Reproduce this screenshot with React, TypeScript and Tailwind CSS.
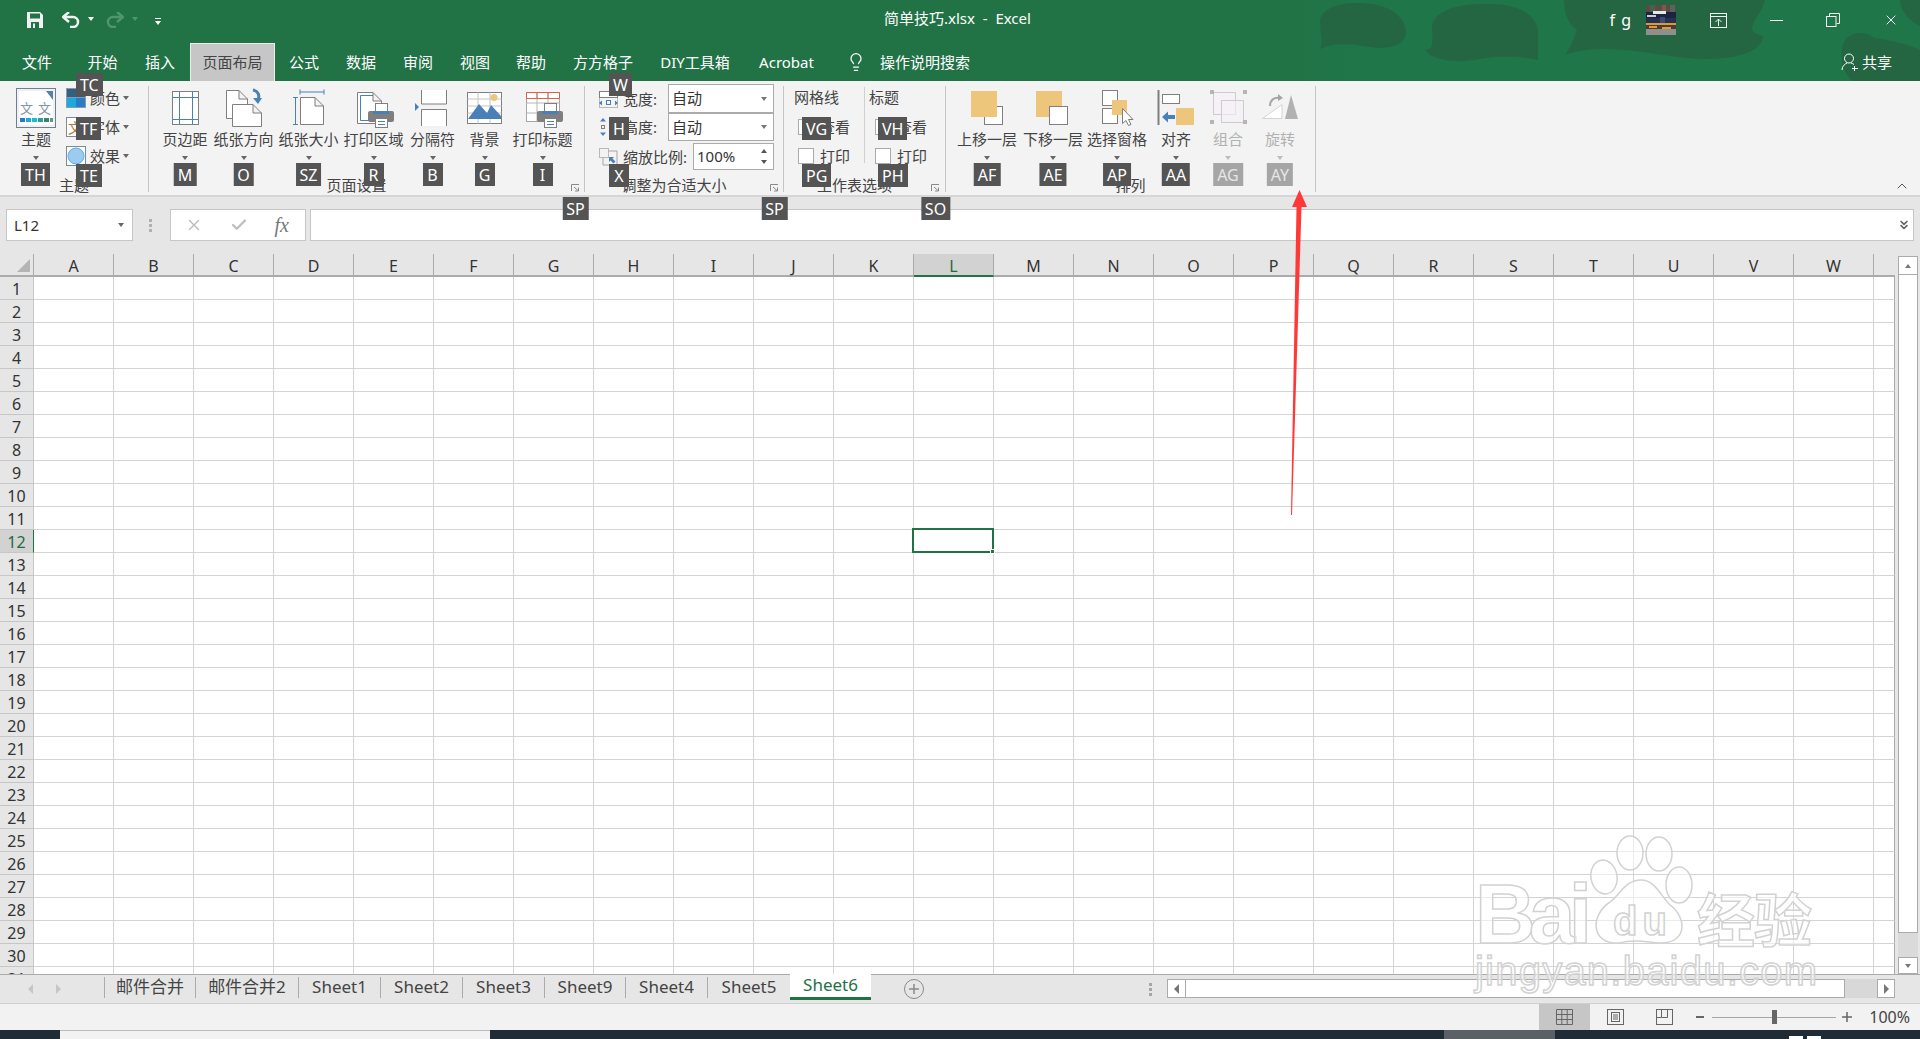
import type { ReactNode } from "react";
import { Check, ChevronUp, ChevronsDown, Lightbulb, X } from "lucide-react";

const GRAY = "#7f7f7f";
const BLUE = "#4a80b8";
const TAN = "#edc67c";
const PALE = "#cfc9d3";

const COLS = "ABCDEFGHIJKLMNOPQRSTUVW".split("");
const ROWS = Array.from({ length: 31 }, (_, i) => i + 1);

function Tip({ label, className = "", off }: { label: string; className?: string; off?: boolean }) {
  return (
    <span
      className={`absolute z-30 flex h-[23px] min-w-[20px] items-center justify-center px-[4px] text-[16px] leading-none ${
        off ? "bg-[#a5a5a5] text-[#e6e6e6]" : "bg-[#545454] text-white"
      } ${className}`}
    >
      {label}
    </span>
  );
}

function Caret({ className = "border-t-[#666]" }: { className?: string }) {
  return <span className={`block h-0 w-0 border-x-[3.5px] border-t-[4px] border-x-transparent ${className}`} />;
}

function BigButton({ w, label, tip, off, children }: { w: string; label: string; tip: string; off?: boolean; children: ReactNode }) {
  return (
    <div className={`relative flex flex-col items-center pt-px ${w}`}>
      <svg width="44" height="42" viewBox="0 0 44 42" fill="none">
        {children}
      </svg>
      <span className={`h-[20px] whitespace-nowrap text-[15px] leading-[20px] ${off ? "text-[#b1b1b1]" : "text-[#444]"}`}>{label}</span>
      <span className="mt-[7px]">
        <Caret className={off ? "border-t-[#bdbdbd]" : "border-t-[#666]"} />
      </span>
      <Tip label={tip} off={off} className="left-1/2 top-[77px] -translate-x-1/2" />
    </div>
  );
}

function Launcher({ tip, right }: { tip: string; right: string }) {
  return (
    <div className={`absolute top-[98px] h-[8px] w-[9px] ${right}`}>
      <svg width="9" height="8" viewBox="0 0 9 8" fill="none" stroke="#8a8a8a" className="block">
        <path d="M.5 7V.5H8M3 3l4 3.5M7.5 3.5v3.5H4" />
      </svg>
      <Tip label={tip} className="left-1/2 top-[13px] -translate-x-1/2" />
    </div>
  );
}

function Group({ w, label, pad, launcher, children }: { w: string; label: string; pad?: string; launcher?: ReactNode; children: ReactNode }) {
  return (
    <div className={`relative flex h-[110px] flex-col ${w}`}>
      <div className="flex h-[89px]">{children}</div>
      <div className={`h-[20px] whitespace-nowrap text-center text-[15px] leading-[20px] text-[#444] ${pad ?? ""}`}>{label}</div>
      {launcher}
    </div>
  );
}

function Sep() {
  return <div className="h-[106px] w-px shrink-0 bg-[#c6c6c6]" />;
}

function Page({ x, y, w, h, fold = 9 }: { x: number; y: number; w: number; h: number; fold?: number }) {
  return (
    <path
      d={`M${x + 0.5} ${y + 0.5}H${x + w - fold}L${x + w - 0.5} ${y + fold}V${y + h - 0.5}H${x + 0.5}ZM${x + w - fold} ${y + 0.5}V${y + fold}H${x + w - 0.5}`}
      fill="#fff"
      stroke={GRAY}
    />
  );
}

function Printer({ x, y }: { x: number; y: number }) {
  return (
    <g>
      <rect x={x + 7.5} y={y + 0.5} width="12" height="10" fill="#fff" stroke={GRAY} />
      <rect x={x} y={y + 8} width="26" height="11" rx="2" fill={GRAY} />
      <rect x={x + 5} y={y + 8} width="16" height="3" fill={BLUE} />
      <rect x={x + 7.5} y={y + 15.5} width="12" height="9" fill="#fff" stroke={GRAY} />
      <path d={`M${x + 10} ${y + 18.5}h7M${x + 10} ${y + 21.5}h7`} stroke={BLUE} />
    </g>
  );
}

function ScaleRow({ icon, label, value, inputW, h, children }: { icon: ReactNode; label: string; value: string; inputW: string; h: string; children?: ReactNode }) {
  return (
    <div className={`relative flex items-center ${h}`}>
      <svg width="19" height="18" viewBox="0 0 19 18" fill="none" className="mr-[5px] shrink-0">
        {icon}
      </svg>
      <span className="flex-1 whitespace-nowrap text-[15px] leading-[20px] text-[#444]">{label}</span>
      <div className={`flex h-full shrink-0 items-center justify-between border border-[#ababab] bg-white pl-[3px] pr-[6px] text-[15px] text-[#333] ${inputW}`}>
        <span>{value}</span>
        {value === "100%" ? (
          <span className="flex flex-col gap-[7px]">
            <Caret className="rotate-180 border-t-[#555]" />
            <Caret className="border-t-[#555]" />
          </span>
        ) : (
          <Caret className="border-t-[#777]" />
        )}
      </div>
      {children}
    </div>
  );
}

function CheckRow({ label }: { label: string }) {
  return (
    <div className="flex h-[16px] items-center gap-[6px]">
      <span className="h-[16px] w-[16px] shrink-0 border border-[#ababab] bg-white" />
      <span className="text-[15px] leading-[20px] text-[#444]">{label}</span>
    </div>
  );
}

function Ribbon() {
  return (
    <div className="relative z-10 flex h-[116px] items-start border-b-2 border-[#d6d6d6] bg-[#f3f3f3] pt-[5px]">
      <Group w="w-[148px]" label="主题">
        <div className="flex pl-[6px]">
          <div className="relative flex w-[60px] flex-col items-center pt-px">
            <svg width="44" height="42" viewBox="0 0 44 42" fill="none">
              <rect x="2.5" y="1.5" width="39" height="39" fill="#fff" stroke="#6f7f91" />
              <rect x="4" y="3" width="36" height="36" fill="#fff" stroke="#dfe4ea" />
              <path d="M32 4h7v9z" fill="#5a7fa5" />
              <text x="6" y="26" fontSize="13" fill="#7e96a8">文</text>
              <text x="24" y="26" fontSize="13" fill="#7e96a8">文</text>
              <rect x="6" y="31" width="5" height="4" fill="#2b78c5" />
              <rect x="12" y="31" width="5" height="4" fill="#1ca9d6" />
              <rect x="18" y="31" width="5" height="4" fill="#1cbccb" />
              <rect x="24" y="31" width="5" height="4" fill="#2aa198" />
              <rect x="30" y="31" width="5" height="4" fill="#36866f" />
              <rect x="36" y="31" width="3" height="4" fill="#5a9a88" />
            </svg>
            <span className="h-[20px] text-[15px] leading-[20px] text-[#444]">主题</span>
            <span className="mt-[7px]">
              <Caret />
            </span>
            <Tip label="TH" className="left-[15px] top-[77px]" />
          </div>
          <div className="relative -mt-[3px] flex flex-col">
            {[
              { t: "颜色", tip: "TC", pos: "left-[10px] -top-[10px]" },
              { t: "字体", tip: "TF", pos: "left-[10px] top-[5px]" },
              { t: "效果", tip: "TE", pos: "left-[10px] top-[23px]" },
            ].map((r, i) => (
              <div key={r.t} className="relative flex h-[29px] items-center">
                <svg width="20" height="20" viewBox="0 0 20 20" className="shrink-0">
                  {i === 0 && (
                    <g>
                      <rect width="20" height="20" fill="#8a9aa8" />
                      <rect x="1" y="1" width="18" height="8" fill="#34607f" />
                      <rect x="1" y="10" width="9" height="9" fill="#1ca9e2" />
                      <rect x="10" y="10" width="9" height="9" fill="#2b7cc8" />
                    </g>
                  )}
                  {i === 1 && (
                    <g>
                      <rect x=".5" y=".5" width="19" height="19" fill="#fff" stroke="#7f8a96" />
                      <text x="2" y="16" fontSize="14" fill="#b5763a">文</text>
                    </g>
                  )}
                  {i === 2 && (
                    <g>
                      <rect x=".5" y=".5" width="19" height="19" fill="#fff" stroke="#7f8a96" />
                      <circle cx="10" cy="10" r="8" fill="#9ccbf0" stroke="#58b0e6" />
                    </g>
                  )}
                </svg>
                <span className="ml-[4px] text-[15px] leading-[20px] text-[#444]">{r.t}</span>
                <span className="ml-[3px]">
                  <Caret />
                </span>
                <Tip label={r.tip} className={r.pos} />
              </div>
            ))}
          </div>
        </div>
      </Group>
      <Sep />

      <Group w="w-[435px]" label="页面设置" pad="pr-[20px]" launcher={<Launcher tip="SP" right="right-[4px]" />}>
        <div className="flex pl-[9px]">
          <BigButton w="w-[54px]" label="页边距" tip="M">
            <rect x="9.5" y="4.5" width="26" height="33" fill="#fff" stroke={GRAY} />
            <path d="M16.5 4.5v33M29.5 4.5v33M9.5 10.5h26M9.5 32.5h26" stroke={BLUE} />
          </BigButton>
          <BigButton w="w-[63px]" label="纸张方向" tip="O">
            <Page x={4} y={3} w={22} h={29} />
            <Page x={10} y={17} w={30} h={23} />
            <path d="M31 3c5 1 7 5 5 10" stroke={BLUE} strokeWidth="3" />
            <path d="M31 11l5 6 4-6z" fill={BLUE} />
          </BigButton>
          <BigButton w="w-[67px]" label="纸张大小" tip="SZ">
            <Page x={13} y={10} w={24} h={28} />
            <path d="M13 2.5v5M37 2.5v5M13 5h24M6 10.5h5M6 37.5h5M8.5 10.5v27" stroke={BLUE} />
          </BigButton>
          <BigButton w="w-[63px]" label="打印区域" tip="R">
            <Page x={5} y={5} w={25} h={32} />
            <path d="M21 8.5H8.5v25H20" stroke={BLUE} />
            <Printer x={16} y={16} />
          </BigButton>
          <BigButton w="w-[55px]" label="分隔符" tip="B">
            <path d="M10.5 3v14h25V3M10.5 39V22.5h25V39" fill="#fff" stroke={GRAY} />
            <path d="M4 16l4 4-4 4z" fill={BLUE} />
          </BigButton>
          <BigButton w="w-[49px]" label="背景" tip="G">
            <rect x="4.5" y="5.5" width="34" height="31" fill="#fff" stroke={GRAY} />
            <path d="M4.5 12h34M4.5 19h34M4.5 26h34M15 5.5v31M27 5.5v31" stroke="#c4c4c4" />
            <circle cx="31" cy="10.5" r="3.5" fill={TAN} />
            <path d="M5 32l11-15 8 9 4-8 10 11v3H5z" fill={BLUE} />
          </BigButton>
          <BigButton w="w-[67px]" label="打印标题" tip="I">
            <rect x="5.5" y="5.5" width="33" height="29" fill="#fff" stroke="#a5a5a5" />
            <path d="M5.5 16h33M5.5 26h33M16 5.5v29M27 5.5v29" stroke="#b5b5b5" />
            <path d="M5.5 5.5h33v6h-33zM16 5.5v6M27 5.5v6" stroke="#d9634a" />
            <Printer x={16} y={16} />
          </BigButton>
        </div>
      </Group>
      <Sep />

      <Group w="w-[198px]" label="调整为合适大小" pad="pr-[20px]" launcher={<Launcher tip="SP" right="right-[4px]" />}>
        <div className="-mt-[2px] flex w-full flex-col pl-[14px] pr-[9px]">
          <ScaleRow
            h="h-[29px]"
            inputW="w-[106px]"
            label="宽度:"
            value="自动"
            icon={
              <g>
                <rect x=".5" y="1.5" width="18" height="6" fill="#fff" stroke={GRAY} />
                <path d="M.5 7.5v10h18v-10" stroke={GRAY} strokeDasharray="1 1" />
                <path d="M0 13l3-2.5v5zM19 13l-3-2.5v5z" fill={BLUE} />
                <rect x="7.5" y="10.5" width="4" height="4" stroke={BLUE} />
              </g>
            }
          >
            <Tip label="W" className="left-[10px] -top-[11px]" />
          </ScaleRow>
          <ScaleRow
            h="h-[28px]"
            inputW="w-[106px]"
            label="高度:"
            value="自动"
            icon={
              <g>
                <path d="M4 0l3 3.5H1zM4 18l3-3.5H1z" fill={BLUE} />
                <rect x="2.5" y="7.5" width="3" height="3" stroke={GRAY} />
              </g>
            }
          >
            <Tip label="H" className="left-[10px] top-[4px]" />
          </ScaleRow>
          <div className="h-[2px] shrink-0" />
          <ScaleRow
            h="h-[27px]"
            inputW="w-[81px]"
            label="缩放比例:"
            value="100%"
            icon={
              <g>
                <rect x=".5" y=".5" width="9" height="9" stroke={GRAY} strokeDasharray="1 1" />
                <path d="M9.5 3h8.5v14H4v-7" stroke="#a5a5a5" />
                <path d="M10 9h5l-1.500 1.500 3 3-2 2-3-3L10 14z" fill={BLUE} />
              </g>
            }
          >
            <Tip label="X" className="left-[10px] top-[21px]" />
          </ScaleRow>
        </div>
      </Group>
      <Sep />

      <Group w="w-[161px]" label="工作表选项" pad="pr-[20px]" launcher={<Launcher tip="SO" right="right-[5px]" />}>
        <div className="flex pt-px">
          {[
            { head: "网格线", w: "w-[80px] pl-[14px]", tips: ["VG", "PG"], headCls: "-ml-[4px]" },
            { head: "标题", w: "w-[81px] pl-[10px]", tips: ["VH", "PH"], headCls: "-ml-[6px]" },
          ].map((c, i) => (
            <div key={c.head} className={`relative flex h-[76px] flex-col ${c.w} ${i === 1 ? "border-l border-[#d0d0d0]" : ""}`}>
              <span className={`text-[15px] leading-[20px] text-[#444] ${c.headCls}`}>{c.head}</span>
              <div className="mt-[12px]">
                <CheckRow label="查看" />
              </div>
              <div className="mt-[13px]">
                <CheckRow label="打印" />
              </div>
              <Tip label={c.tips[0]} className={`top-[30px] ${i === 0 ? "left-[18px]" : "left-[13px]"}`} />
              <Tip label={c.tips[1]} className={`top-[77px] ${i === 0 ? "left-[18px]" : "left-[13px]"}`} />
            </div>
          ))}
        </div>
      </Group>
      <Sep />

      <Group w="w-[369px]" label="排列">
        <div className="flex pl-[9px]">
          <BigButton w="w-[64px]" label="上移一层" tip="AF">
            <rect x="19.5" y="19.5" width="18" height="18" fill="#fff" stroke={GRAY} />
            <rect x="6" y="4" width="26" height="26" fill={TAN} />
          </BigButton>
          <BigButton w="w-[68px]" label="下移一层" tip="AE">
            <rect x="5" y="4" width="26" height="26" fill={TAN} />
            <rect x="18.5" y="19.5" width="18" height="18" fill="#fff" stroke={GRAY} />
          </BigButton>
          <BigButton w="w-[60px]" label="选择窗格" tip="AP">
            <rect x="7.5" y="3.500" width="15" height="15" fill="#fff" stroke={GRAY} />
            <rect x="7.500" y="21.500" width="15" height="15" fill="#fff" stroke={GRAY} />
            <rect x="17" y="13" width="15" height="15" fill={TAN} />
            <path d="M27.500 21.500v15l3.500-3 2.500 5 2.500-1-2.500-5h4.500z" fill="#fff" stroke={GRAY} />
          </BigButton>
          <BigButton w="w-[58px]" label="对齐" tip="AA">
            <path d="M4.500 3v35" stroke={GRAY} strokeWidth="2" />
            <rect x="8.500" y="7.500" width="17" height="9" fill="#fff" stroke={GRAY} />
            <rect x="22" y="21" width="18" height="17" fill={TAN} />
            <path d="M8 30l6-5.500v3.500h7v4h-7v3.500z" fill={BLUE} />
          </BigButton>
          <BigButton w="w-[46px]" label="组合" tip="AG" off>
            <rect x="7.500" y="5.500" width="22" height="22" fill="#f5f1f7" stroke={PALE} />
            <rect x="15.500" y="13.500" width="22" height="22" fill="#f5f1f7" fillOpacity=".6" stroke={PALE} />
            <path d="M4 3h4v4H4zM37 3h4v4h-4zM4 33h4v4H4zM37 33h4v4h-4z" fill="#b5b5b5" />
          </BigButton>
          <BigButton w="w-[58px]" label="旋转" tip="AY" off>
            <path d="M40 32H27L33 8z" fill="#b1b1b1" />
            <path d="M4.500 31.500h19.500v-14z" fill="#fff" stroke="#d4d4d4" />
            <path d="M12 19c0-6 4-9 10-8" stroke="#a5a5a5" strokeWidth="2" />
            <path d="M20 7l5 4-5 3z" fill="#a5a5a5" />
          </BigButton>
        </div>
      </Group>
      <Sep />

      <div className="ml-auto mr-[10px] self-end pb-px">
        <ChevronUp className="h-[16px] w-[16px] text-[#555]" strokeWidth={1.5} />
      </div>
    </div>
  );
}

function TitleBar() {
  const tabs = [
    ["文件", "w-[58px]"],
    ["开始", "w-[73px]"],
    ["插入", "w-[42px] mr-[9px]"],
    ["页面布局", "w-[85px]"],
    ["公式", "w-[58px]"],
    ["数据", "w-[56px]"],
    ["审阅", "w-[58px]"],
    ["视图", "w-[56px]"],
    ["帮助", "w-[56px]"],
    ["方方格子", "w-[88px]"],
    ["DIY工具箱", "w-[96px]"],
    ["Acrobat", "w-[87px]"],
  ];
  return (
    <header className="relative h-[81px] bg-[#217346] text-white">
      <svg width="620" height="81" viewBox="0 0 620 81" className="absolute right-0 top-0">
        <defs>
          <linearGradient id="titleFade" x1="0" x2="1" y1="0" y2="0">
            <stop offset="0" stopColor="#217346" />
            <stop offset=".12" stopColor="#1f7749" />
          </linearGradient>
        </defs>
        <rect width="620" height="81" fill="url(#titleFade)" />
        <g fill="#256642">
          <path d="M20 20C22 8 40 2 60 3C90 3 106 18 106 32C106 45 90 50 70 47C50 44 35 42 20 49C24 42 20 35 20 20Z" />
          <path d="M132 25C135 10 160 3 190 4C220 4 235 15 238 30L238 60C215 55 195 56 175 60C150 64 130 58 125 50C135 50 132 40 132 25Z" />
          <path d="M264 0L465 0C460 20 440 30 463 36C463 50 440 60 400 59C360 58 310 40 265 55C275 40 275 33 277 30C268 25 264 12 264 0Z" />
          <path d="M542 48C545 30 565 30 575 38C590 40 610 45 620 50L620 81L552 81C542 70 540 60 542 48Z" />
          <path d="M600 0L620 0L620 26C610 22 600 10 600 0Z" />
        </g>
      </svg>

      <div className="relative flex h-[40px] items-start">
        <div className="flex items-center pt-[12px]">
          <svg width="16" height="16" viewBox="0 0 16 16" className="ml-[27px]">
            <path d="M0 0h13l3 3v13H0z" fill="#f2f2f2" />
            <rect x="3" y="1.500" width="10" height="5" fill="#217346" />
            <rect x="4" y="10" width="8" height="6" fill="#217346" />
            <rect x="6" y="11.500" width="2" height="4.500" fill="#f2f2f2" />
          </svg>
          <svg width="18" height="16" viewBox="0 0 18 16" fill="none" className="ml-[19px]">
            <path d="M1 5h10a5 5 0 0 1 0 10H8" stroke="#f2f2f2" strokeWidth="2.500" />
            <path d="M7 0L1 5l6 5" stroke="#f2f2f2" strokeWidth="2.500" />
          </svg>
          <span className="ml-[8px] -mt-[3px]">
            <Caret className="border-t-white" />
          </span>
          <svg width="18" height="16" viewBox="0 0 18 16" fill="none" className="ml-[12px]">
            <path d="M17 5H7a5 5 0 0 0 0 10h3" stroke="#4f9670" strokeWidth="2.500" />
            <path d="M11 0l6 5-6 5" stroke="#4f9670" strokeWidth="2.500" />
          </svg>
          <span className="ml-[8px] -mt-[3px]">
            <Caret className="border-t-[#4f9670]" />
          </span>
          <span className="ml-[17px] mt-[3px] flex flex-col items-center gap-[2px]">
            <span className="h-px w-[6px] bg-white" />
            <Caret className="border-t-white" />
          </span>
        </div>
        <div className="absolute left-[884px] top-[8px] whitespace-pre text-[15px] leading-[21px]">简单技巧.xlsx  -  Excel</div>
        <div className="ml-auto flex h-[40px] items-center pr-[21px]">
          <span className="mr-[14px] text-[16px] tracking-[1px]">f g</span>
          <svg width="30" height="30" viewBox="0 0 30 30" className="mr-[34px]">
            <rect width="30" height="30" fill="#5d4a45" />
            <rect x="4" y="0" width="5" height="7" fill="#47604f" />
            <rect x="16" y="0" width="4" height="7" fill="#7a5a4e" />
            <rect x="24" y="0" width="5" height="7" fill="#4f6b58" />
            <rect y="7" width="30" height="6" fill="#1d2440" />
            <rect x="7" y="6" width="13" height="3" fill="#e8e8ea" />
            <rect x="1" y="10" width="9" height="2" fill="#c9ccd6" />
            <rect y="13" width="30" height="5" fill="#26304f" />
            <rect x="14" y="12" width="5" height="7" fill="#3c4a78" />
            <rect y="18" width="30" height="2" fill="#d79a3c" />
            <rect y="20" width="30" height="4" fill="#4d3d2c" />
            <rect y="24" width="30" height="6" fill="#8f8f8f" />
            <rect x="3" y="21" width="8" height="2" fill="#e09a3a" />
            <rect x="16" y="22" width="9" height="2" fill="#e09a3a" />
            <rect x="8" y="26" width="2" height="2" fill="#c9822e" />
          </svg>
          <svg width="17" height="15" viewBox="0 0 17 15" fill="none" stroke="#f2f2f2" className="mr-[43px]">
            <rect x=".5" y=".5" width="16" height="14" />
            <path d="M.5 3.500h16M8.500 13V6M5.500 9l3-3 3 3" />
          </svg>
          <span className="mr-[43px] h-px w-[13px] bg-white" />
          <svg width="14" height="14" viewBox="0 0 14 14" fill="none" stroke="#f2f2f2" className="mr-[43px]">
            <rect x=".5" y="3.500" width="9.500" height="10" />
            <path d="M3.500 3V.5H13.500V10.500H10.500" />
          </svg>
          <X className="h-[16px] w-[16px]" strokeWidth={1.5} />
        </div>
      </div>

      <div className="relative flex h-[41px] items-end pl-[8px]">
        {tabs.map(([t, w]) => (
          <div
            key={t}
            className={`flex h-[38px] items-center justify-center whitespace-nowrap text-[15px] ${w} ${
              t === "页面布局" ? "border-x border-t border-[#ececec] bg-[#c6c6c6] text-[#444]" : ""
            }`}
          >
            {t}
          </div>
        ))}
        <div className="flex h-[38px] items-center pl-[16px]">
          <Lightbulb className="h-[20px] w-[20px]" strokeWidth={1.5} />
          <span className="ml-[14px] whitespace-nowrap text-[15px]">操作说明搜索</span>
        </div>
        <div className="ml-auto flex h-[38px] items-center pr-[28px]">
          <svg width="18" height="18" viewBox="0 0 18 18" fill="none" stroke="#fff" className="mr-[3px]">
            <circle cx="8" cy="5.500" r="4.500" />
            <path d="M1 17c0-4 3-6 5-7M10 10c1 .3 2 .8 3 1.500M13.500 13v5M11 15.500h6" />
          </svg>
          <span className="text-[15px]">共享</span>
        </div>
      </div>
    </header>
  );
}

function FormulaBar() {
  return (
    <div className="flex h-[57px] items-start bg-[#e6e6e6] pt-[12px]">
      <div className="ml-[6px] flex h-[32px] w-[127px] items-center justify-between border border-[#c6c6c6] bg-white pl-[7px] pr-[8px] text-[15px] text-[#333]">
        L12
        <Caret className="border-t-[#666]" />
      </div>
      <div className="ml-[16px] mt-[10px] flex flex-col gap-[2px]">
        <span className="h-[3px] w-[3px] bg-[#b0b0b0]" />
        <span className="h-[3px] w-[3px] bg-[#b0b0b0]" />
        <span className="h-[3px] w-[3px] bg-[#b0b0b0]" />
      </div>
      <div className="ml-[18px] flex h-[32px] w-[136px] items-center justify-between border border-[#c6c6c6] bg-white pl-[14px] pr-[16px] text-[#bdbdbd]">
        <X className="h-[18px] w-[18px]" strokeWidth={2} />
        <Check className="h-[18px] w-[18px]" strokeWidth={3} />
        <span className="font-['Liberation_Serif',serif] text-[20px] italic text-[#777]">fx</span>
      </div>
      <div className="ml-[4px] flex h-[32px] flex-1 items-center justify-end border border-[#c6c6c6] bg-white pr-[2px]">
        <ChevronsDown className="h-[14px] w-[14px] text-[#666]" strokeWidth={3} />
      </div>
      <div className="w-[6px]" />
    </div>
  );
}

function Sheet() {
  return (
    <div className="flex h-[720px] bg-[#e6e6e6]">
      <div className="flex w-[1895px] flex-col">
        <div className="flex h-[23px] border-b-2 border-[#ababab]">
          <div className="flex w-[34px] shrink-0 items-end justify-end border-r border-[#ababab] pb-[3px] pr-[3px]">
            <span className="h-0 w-0 border-b-[13px] border-l-[13px] border-b-[#b4b4b4] border-l-transparent" />
          </div>
          {COLS.map((c) => (
            <div
              key={c}
              className={`flex w-[80px] shrink-0 items-center justify-center border-r border-[#ababab] pt-[3px] text-[16px] leading-none ${
                c === "L" ? "-mb-[2px] border-b-2 border-b-[#217346] bg-[#d2d2d2] text-[#1f6b41]" : "text-[#333]"
              }`}
            >
              {c}
            </div>
          ))}
          <div className="flex-1" />
        </div>
        <div className="h-[697px] overflow-hidden bg-white">
          {ROWS.map((r) => (
            <div key={r} className="flex h-[23px]">
              <div
                className={`flex w-[34px] shrink-0 items-center justify-center border-b border-r pt-[2px] text-[16px] leading-none ${
                  r === 12 ? "border-b-[#c6c6c6] border-r-[#217346] bg-[#d2d2d2] text-[#1f6b41]" : "border-[#c6c6c6] bg-[#e6e6e6] text-[#333]"
                }`}
              >
                {r}
              </div>
              {COLS.map((c) => (
                <div key={c} className="relative w-[80px] shrink-0 border-b border-r border-[#d4d4d4]">
                  {r === 12 && c === "L" && (
                    <div className="absolute -left-[2px] -top-[2px] z-10 h-[25px] w-[82px] border-2 border-[#217346]">
                      <span className="absolute -bottom-[3px] -right-[3px] h-[5px] w-[5px] border border-white bg-[#217346]" />
                    </div>
                  )}
                </div>
              ))}
              <div className="flex-1 border-b border-r border-[#d4d4d4] border-r-[#ababab]" />
            </div>
          ))}
        </div>
      </div>
      <div className="flex flex-1 flex-col pl-[3px] pr-[2px] pt-[2px]">
        <div className="flex h-[19px] items-center justify-center border border-[#ababab] bg-white">
          <Caret className="rotate-180 border-t-[#777]" />
        </div>
        <div className="h-[658px] border border-t-0 border-[#ababab] bg-white" />
        <div className="h-[24px] bg-[#dadada]" />
        <div className="flex h-[17px] items-center justify-center border border-[#ababab] bg-white">
          <Caret className="border-t-[#777]" />
        </div>
      </div>
    </div>
  );
}

function TabBar() {
  const sheets = [
    ["邮件合并", "w-[91px]"],
    ["邮件合并2", "w-[103px]"],
    ["Sheet1", "w-[82px]"],
    ["Sheet2", "w-[82px]"],
    ["Sheet3", "w-[82px]"],
    ["Sheet9", "w-[81px]"],
    ["Sheet4", "w-[82px]"],
    ["Sheet5", "w-[83px]"],
  ];
  return (
    <div className="flex h-[29px] items-start border-t border-[#ababab] bg-[#e6e6e6]">
      <div className="flex h-[27px] w-[104px] shrink-0 items-center pl-[28px]">
        <span className="h-0 w-0 border-y-[5px] border-r-[5px] border-y-transparent border-r-[#c6c6c6]" />
        <span className="ml-[23px] h-0 w-0 border-y-[5px] border-l-[5px] border-y-transparent border-l-[#c6c6c6]" />
      </div>
      {sheets.map(([s, w]) => (
        <div key={s} className={`mt-[2px] flex h-[21px] items-center justify-center border-l border-[#ababab] pb-[3px] text-[17px] leading-none text-[#444] ${w}`}>
          {s}
        </div>
      ))}
      <div className="-mt-px flex h-[26px] w-[81px] items-center justify-center border-b-[3px] border-[#217346] bg-white pb-[2px] text-[17px] leading-none text-[#217346]">
        Sheet6
      </div>
      <div className="flex h-[27px] w-[86px] items-center justify-center">
        <svg width="20" height="20" viewBox="0 0 20 20" fill="none" stroke="#8a8a8a">
          <circle cx="10" cy="10" r="9.500" />
          <path d="M10 5v10M5 10h10" strokeWidth="1.500" />
        </svg>
      </div>
      <div className="ml-auto mr-[25px] flex h-[28px] items-start">
        <div className="mr-[15px] mt-[8px] flex flex-col gap-[2px]">
          <span className="h-[3px] w-[3px] bg-[#a5a5a5]" />
          <span className="h-[3px] w-[3px] bg-[#a5a5a5]" />
          <span className="h-[3px] w-[3px] bg-[#a5a5a5]" />
        </div>
        <div className="mt-[4px] flex h-[19px] w-[728px] bg-[#d8d8d8]">
          <div className="flex w-[19px] items-center justify-center border border-[#ababab] bg-white">
            <span className="h-0 w-0 border-y-[5px] border-r-[5px] border-y-transparent border-r-[#777]" />
          </div>
          <div className="w-[659px] border-y border-r border-[#ababab] bg-white" />
          <div className="flex-1" />
          <div className="flex w-[18px] items-center justify-center border border-[#ababab] bg-white">
            <span className="h-0 w-0 border-y-[5px] border-l-[5px] border-y-transparent border-l-[#777]" />
          </div>
        </div>
      </div>
    </div>
  );
}

function StatusBar() {
  return (
    <div className="flex h-[27px] items-center justify-end border-t border-[#d0d0d0] bg-[#f2f2f2] pr-[10px] text-[#444]">
      <div className="flex h-full w-[51px] items-center justify-center bg-[#c6c6c6]">
        <svg width="17" height="16" viewBox="0 0 17 16" fill="none" stroke="#666">
          <path d="M.5.5h16v15H.5zM.5 5.500h16M.5 10.500h16M5.800.5v15M11.200.5v15" />
        </svg>
      </div>
      <div className="flex h-full w-[50px] items-center justify-center">
        <svg width="17" height="16" viewBox="0 0 17 16" fill="none" stroke="#666">
          <rect x=".5" y=".5" width="16" height="15" />
          <rect x="4.500" y="3.500" width="8" height="9" />
          <path d="M6 6h5M6 8h5M6 10h5" />
        </svg>
      </div>
      <div className="flex h-full w-[48px] items-center justify-center">
        <svg width="17" height="16" viewBox="0 0 17 16" fill="none" stroke="#666">
          <rect x=".5" y=".5" width="16" height="15" />
          <path d="M5.500.5v8h6v-8M.5 8.500h5" />
        </svg>
      </div>
      <span className="ml-[8px] h-[2px] w-[8px] bg-[#666]" />
      <div className="relative ml-[8px] flex h-full w-[124px] items-center">
        <div className="h-px w-full bg-[#a5a5a5]" />
        <span className="absolute left-[60px] h-[14px] w-[5px] bg-[#666]" />
      </div>
      <svg width="10" height="10" viewBox="0 0 10 10" stroke="#666" strokeWidth="1.500" className="ml-[6px]">
        <path d="M5 0v10M0 5h10" />
      </svg>
      <span className="ml-[17px] text-[16px]">100%</span>
    </div>
  );
}

function Overlays() {
  return (
    <>
      <svg width="350" height="175" viewBox="0 0 350 175" className="absolute left-[1470px] top-[830px] z-20" fontFamily="'Liberation Sans', 'Noto Sans CJK SC', sans-serif">
        <g fill="#ffffff" fillOpacity=".55" stroke="#d2d2d2" strokeWidth="1.500">
          <ellipse cx="134" cy="47" rx="13" ry="17" transform="rotate(-10 134 47)" />
          <ellipse cx="160" cy="23" rx="13" ry="17" />
          <ellipse cx="189" cy="24" rx="13" ry="17" />
          <ellipse cx="209" cy="55" rx="13" ry="18" />
          <path d="M171 50C185 50 190 65 200 75C215 85 220 113 190 113C180 113 165 108 150 113C120 115 120 85 140 72C150 65 155 50 171 50Z" />
          <text x="5" y="113" fontSize="84" fontWeight="700" textLength="117">Bai</text>
          <text x="143" y="105" fontSize="40" fontWeight="700" textLength="54">du</text>
          <text x="227" y="112" fontSize="58" fontWeight="700" textLength="115" fontFamily="'Noto Sans CJK SC', sans-serif">经验</text>
          <text x="5" y="155" fontSize="40" textLength="342">jingyan.baidu.com</text>
        </g>
      </svg>
      <svg width="30" height="340" viewBox="0 0 30 340" className="absolute left-[1285px] top-[185px] z-40">
        <path d="M6 330L11.500 22H7L14.500 5L22 22H16.500L7 330Z" fill="#ff3838" />
      </svg>
    </>
  );
}

export default function App() {
  return (
    <div className="relative h-[1039px] w-[1920px] overflow-hidden bg-[#e6e6e6] font-['Noto_Sans','Noto_Sans_CJK_SC',sans-serif]">
      <TitleBar />
      <Ribbon />
      <FormulaBar />
      <Sheet />
      <TabBar />
      <StatusBar />
      <div className="flex h-[9px] bg-[#1f2c36]">
        <div className="ml-[60px] w-[430px] border-t border-[#bbbbbb] bg-[#f2f2f2]" />
        <div className="ml-[954px] w-[111px] bg-[#5a6065]" />
        <div className="ml-[234px] mt-[6px] flex gap-[4px]">
          <span className="h-[3px] w-[14px] bg-white" />
          <span className="h-[3px] w-[14px] bg-white" />
        </div>
      </div>
      <Overlays />
    </div>
  );
}
